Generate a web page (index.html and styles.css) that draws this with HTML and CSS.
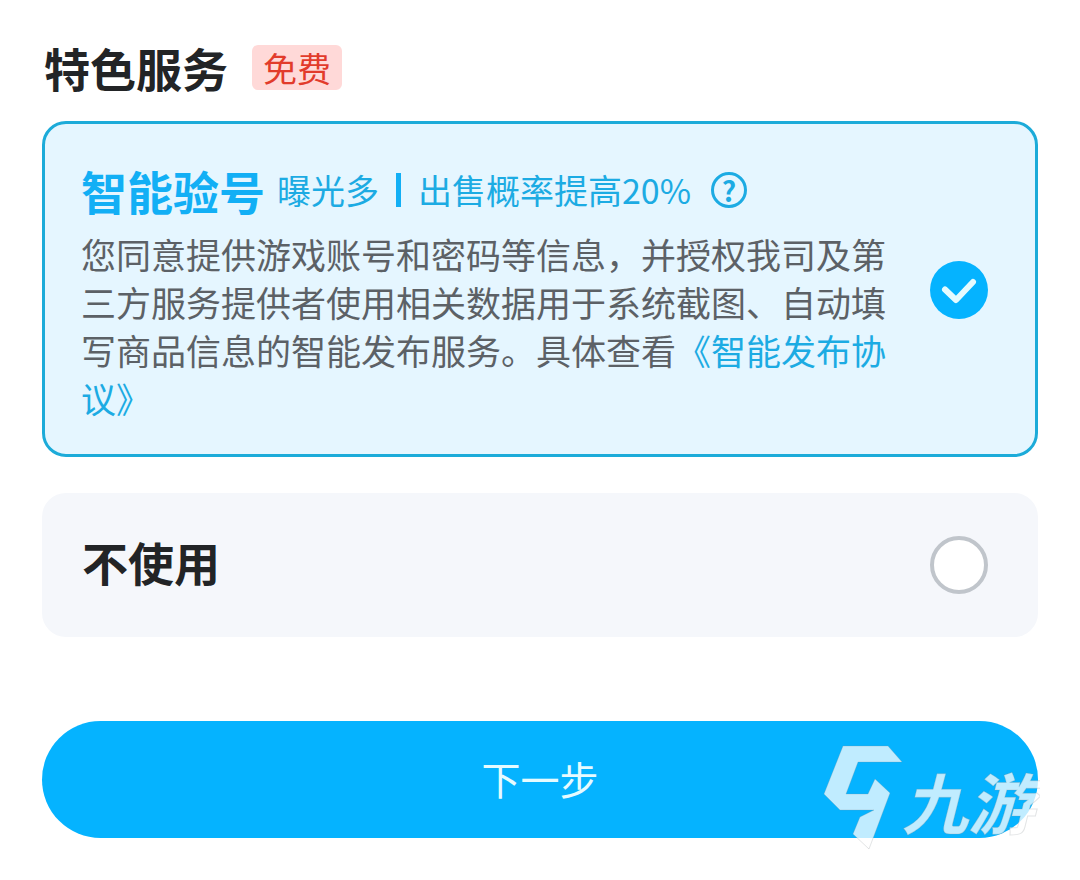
FILE: index.html
```
<!DOCTYPE html>
<html lang="zh-CN">

<head>
    <meta charset="utf-8">
    <meta name="viewport" content="width=device-width, initial-scale=1">
    <title>特色服务</title>
    <link rel="stylesheet" href="styles.css">
</head>

<body>
    <form class="service">
        <div class="title">
            <h1>特色服务</h1>
            <span class="tag">免费</span>
        </div>

        <div class="option option-smart">
            <div class="content">
                <div class="head">
                    <label class="name" for="smart">智能验号</label>
                    <span class="sub">曝光多</span>
                    <span class="line"></span>
                    <span class="sub">出售概率提高20%</span>
                    <button type="button" class="help" aria-label="帮助">?</button>
                </div>
                <p class="desc">您同意提供游戏账号和密码等信息，并授权我司及第三方服务提供者使用相关数据用于系统截图、自动填写商品信息的智能发布服务。具体查看<a href="#">《智能发布协议》</a></p>
            </div>
            <div class="radio">
                <input type="radio" id="smart" name="service" value="smart" checked>
                <svg viewBox="0 0 58 58" aria-hidden="true">
                    <path d="M15 28.500 L26 39 L43 21" />
                </svg>
            </div>
        </div>

        <div class="option option-none">
            <label class="name" for="none">不使用</label>
            <div class="radio">
                <input type="radio" id="none" name="service" value="none">
                <svg viewBox="0 0 58 58" aria-hidden="true">
                    <path d="M15 28.500 L26 39 L43 21" />
                </svg>
            </div>
        </div>

        <div class="footer">
            <button type="submit" class="next">下一步</button>
            <svg class="watermark" viewBox="0 0 220 110" aria-label="九游">
                <path d="M23 6 H68 L82 22 H38 L26 54 H48 L55 39 L70 53 L49 109 L33 94 L40 77 L54 70 H20 L4 54 Z" />
                <text x="82" y="89">九游</text>
            </svg>
        </div>
    </form>
</body>

</html>
```
FILE: styles.css
```
* {
    padding: 0;
    margin: 0;
    box-sizing: border-box;
}

body {
    background: #fff;
    color: #222426;
    font-family: "Noto Sans CJK SC", sans-serif;
}

button {
    border: none;
    font-family: inherit;
    cursor: pointer;
}

.service {
    padding: 34px 42px;
}

.title {
    display: flex;
    align-items: center;
    gap: 24px;
    height: 66px;
    padding-left: 2px;
    margin-bottom: 21px;
}

h1,
.name {
    font-size: 46px;
    line-height: 64px;
    font-weight: bold;
}

.tag {
    padding: 0 11px;
    border-radius: 6px;
    background: #ffd9d8;
    color: #e23b2b;
    font-size: 34px;
    line-height: 45px;
}

.option {
    display: flex;
    align-items: center;
    justify-content: space-between;
    gap: 24px;
    border-radius: 24px;
}

.option-smart {
    padding: 34px 47px 32px 36px;
    margin-bottom: 36px;
    border: 3px solid #1cabd9;
    background: #e5f6ff;
}

.option-none {
    padding: 36px 50px 36px 40px;
    margin-bottom: 84px;
    background: #f5f7fb;
}

.option-none .name {
    padding-bottom: 8px;
}

.head {
    display: flex;
    align-items: center;
    margin-bottom: 8px;
}

.head .name {
    margin-right: 12px;
    color: #12aff5;
}

.sub {
    color: #1cabe3;
    font-size: 34px;
    line-height: 48px;
}

.line {
    width: 5px;
    height: 34px;
    margin: 0 17px;
    background: #12aff5;
}

.help {
    width: 36px;
    height: 36px;
    margin-left: 20px;
    border: 3px solid #1cabe3;
    border-radius: 50%;
    background: none;
    color: #1cabe3;
    font-size: 28px;
    line-height: 28px;
    font-weight: bold;
}

.desc {
    color: #5c6166;
    font-size: 35px;
    line-height: 48px;
}

.desc a {
    color: #1cabe3;
    text-decoration: none;
}

.radio {
    display: grid;
    flex: none;
    width: 58px;
    height: 58px;
}

.radio input,
.radio svg {
    grid-area: 1 / 1;
    width: 100%;
    height: 100%;
}

.radio input {
    appearance: none;
    border: 4px solid #c0c5cb;
    border-radius: 50%;
    background: #fff;
}

.radio input:checked {
    border: none;
    background: #05b3ff;
}

.radio svg {
    display: none;
    fill: none;
    stroke: #e5fbff;
    stroke-width: 6;
    stroke-linecap: round;
    stroke-linejoin: round;
    pointer-events: none;
}

.radio input:checked + svg {
    display: block;
}

.footer {
    position: relative;
}

.next {
    display: block;
    width: 100%;
    height: 117px;
    padding-bottom: 4px;
    border-radius: 60px;
    background: #05b3ff;
    color: #e5fbff;
    font-size: 39px;
}

/* logo laid over the end of the button */
.watermark {
    position: absolute;
    right: -2px;
    top: 19px;
    width: 220px;
    height: 110px;
    fill: #fff;
    fill-opacity: 0.75;
    stroke: #8a9499;
    stroke-opacity: 0.25;
    stroke-width: 1;
    pointer-events: none;
}

.watermark text {
    font-size: 66px;
    font-weight: bold;
    font-style: italic;
}
```
